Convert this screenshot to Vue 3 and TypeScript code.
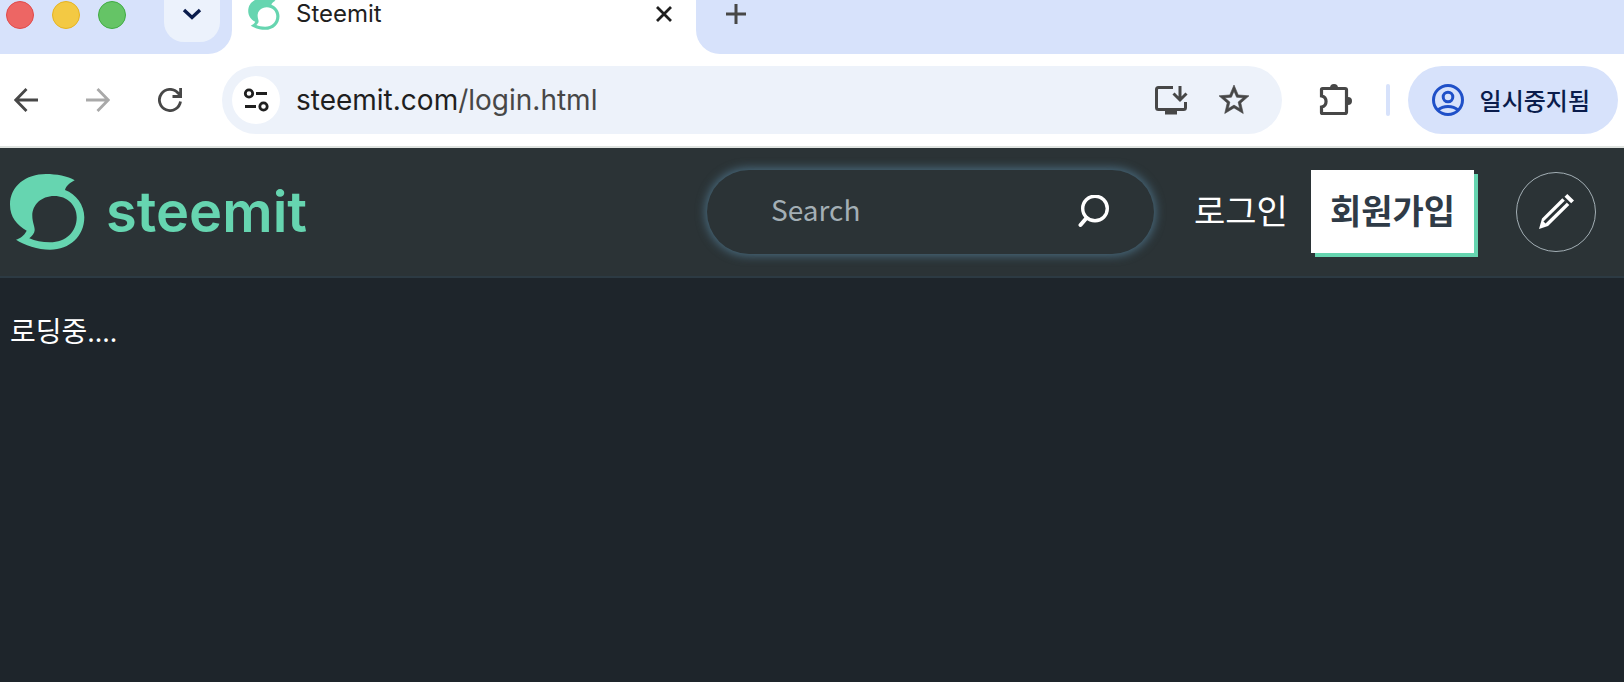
<script setup lang="ts">
import { ref } from 'vue'

const query = ref('')
const lights = ['close', 'minimize', 'zoom']
</script>

<template>
  <div class="window">
    <div class="tabstrip">
      <div class="strip-left">
        <div class="lights">
          <button v-for="name in lights" :key="name" class="light" :class="name" :aria-label="name"></button>
        </div>
        <button class="tab-search" aria-label="Search tabs">
          <svg width="20" height="14" viewBox="0 0 20 14"><path d="M2 3 10 10.500 18 3" fill="none" stroke="#0a1c4c" stroke-width="3.4" /></svg>
        </button>
      </div>
      <div class="tab">
        <svg class="favicon" width="32" height="32" viewBox="0 0 75 76"><path class="mark" fill-rule="evenodd" d="M64.700 6.300C58 2 46 0 36 0 16 0 0 12 0 30.700 0 43 7 51 16.700 56.700 14 62 10 64.500 6 65.700 14 71 28 75.700 40 75.700 60 75.700 74.300 62 74.300 43.300 74.300 31 66 20 55 16 56 12 60 8.500 64.700 6.300ZM44.300 22C57 22 66.700 31 66.700 43.300 66.700 58 56 68.300 40 68.300 32 68.300 25 67 19.300 64.300 22 62 24.700 59 24.700 56 24.700 52 22.300 48 22.300 41.700 22.300 31 31 22 44.300 22Z" /></svg>
        <span class="tab-title">Steemit</span>
        <button class="icon-btn tab-close" aria-label="Close tab">
          <svg width="16" height="16" viewBox="0 0 16 16"><path d="M1 1 15 15M15 1 1 15" stroke="#1f1f1f" stroke-width="2.8" /></svg>
        </button>
      </div>
      <div class="strip-right">
        <button class="icon-btn" aria-label="New tab">
          <svg width="20" height="20" viewBox="0 0 20 20"><path d="M10 0V20M0 10H20" stroke="#474747" stroke-width="3" /></svg>
        </button>
      </div>
    </div>

    <div class="toolbar">
      <div class="nav">
        <button class="icon-btn nav-btn" aria-label="Back">
          <svg width="24" height="24" viewBox="0 0 24 24"><path d="M24 12H2M12.500 1 1.800 12 12.500 23" fill="none" stroke="#474747" stroke-width="2.800" /></svg>
        </button>
        <button class="icon-btn nav-btn" aria-label="Forward">
          <svg width="24" height="24" viewBox="0 0 24 24"><path d="M0 12H22M11.500 1 22.200 12 11.500 23" fill="none" stroke="#a9a9a9" stroke-width="2.800" /></svg>
        </button>
        <button class="icon-btn nav-btn" aria-label="Reload">
          <svg width="24" height="24" viewBox="0 0 24 24"><path d="M22.500 13.500A10.600 10.600 0 1 1 20 5L22 7.500M22.600 0V8.500H14.500" fill="none" stroke="#474747" stroke-width="2.800" /></svg>
        </button>
      </div>
      <div class="omnibox">
        <button class="site-info" aria-label="Site information">
          <svg width="26" height="24" viewBox="0 0 26 24" fill="none" stroke="#1f1f1f" stroke-width="2.800"><circle cx="6" cy="5.500" r="3.700" /><path d="M13 5.500H24M2 18.500H13" /><circle cx="20.500" cy="18.500" r="3.700" /></svg>
        </button>
        <a class="url" href="#">steemit.com<span>/login.html</span></a>
        <button class="icon-btn" aria-label="Install app">
          <svg width="34" height="30" viewBox="0 0 34 30" fill="none" stroke="#474747" stroke-width="3"><path d="M19 2.500H4.500Q2.500 2.500 2.500 4.500V22.500Q2.500 24.500 4.500 24.500H29.500Q31.500 24.500 31.500 22.500V17" /><path d="M26 1V14.500M19.500 8.500 26 15 32.500 8.500" /><path d="M11 27H23" stroke-width="5" /></svg>
        </button>
        <button class="icon-btn" aria-label="Bookmark this tab">
          <svg width="36" height="36" viewBox="0 0 24 24"><path fill="#474747" stroke="#474747" stroke-width="0.4" d="m22 9.240-7.190-.62L12 2 9.190 8.630 2 9.240l5.460 4.730L5.820 21 12 17.270 18.180 21l-1.630-7.030L22 9.240zM12 15.400l-3.760 2.270 1-4.280-3.320-2.880 4.380-.38L12 6.100l1.710 4.040 4.380.38-3.320 2.880 1 4.280L12 15.400z" /></svg>
        </button>
      </div>
      <button class="icon-btn extensions" aria-label="Extensions">
        <svg width="34" height="34" viewBox="0 0 34 34"><path d="M3.500 5.500H26Q27.500 5.500 27.500 7V29Q27.500 30.500 26 30.500H3.500Q2.500 30.500 2.500 29.500V24A5.600 5.600 0 0 0 2.500 13V6.500Q2.500 5.500 3.500 5.500Z" fill="none" stroke="#474747" stroke-width="3.200" /><path d="M11 5.500V5A4 4 0 0 1 19 5V5.500ZM28 14H29A4 4 0 0 1 29 22H28Z" fill="#474747" /></svg>
      </button>
      <span class="divider"></span>
      <button class="profile">
        <svg width="32" height="32" viewBox="0 0 32 32" fill="none" stroke="#1f50c8" stroke-width="3"><circle cx="16" cy="16" r="14.500" /><circle cx="16" cy="13" r="4.800" /><path d="M6 26Q10 22.500 16 22.500T26 26" /></svg>
        <span>일시중지됨</span>
      </button>
    </div>

    <header class="site-header">
      <a class="brand" href="#" aria-label="steemit">
        <svg width="75" height="76" viewBox="0 0 75 76"><path class="mark" fill-rule="evenodd" d="M64.700 6.300C58 2 46 0 36 0 16 0 0 12 0 30.700 0 43 7 51 16.700 56.700 14 62 10 64.500 6 65.700 14 71 28 75.700 40 75.700 60 75.700 74.300 62 74.300 43.300 74.300 31 66 20 55 16 56 12 60 8.500 64.700 6.300ZM44.300 22C57 22 66.700 31 66.700 43.300 66.700 58 56 68.300 40 68.300 32 68.300 25 67 19.300 64.300 22 62 24.700 59 24.700 56 24.700 52 22.300 48 22.300 41.700 22.300 31 31 22 44.300 22Z" /></svg>
        <span>steemit</span>
      </a>
      <form class="search" @submit.prevent>
        <input v-model="query" type="text" placeholder="Search" aria-label="Search" />
        <button class="icon-btn" aria-label="Submit search">
          <svg width="32" height="34" viewBox="0 0 32 34" fill="none" stroke="#fff" stroke-width="3.400"><circle cx="17" cy="13.500" r="12.300" /><path d="M8.500 23 2.500 30" stroke-linecap="round" stroke-width="4" /></svg>
        </button>
      </form>
      <a class="login" href="#">로그인</a>
      <button class="signup">회원가입</button>
      <button class="compose" aria-label="Create a post">
        <svg width="36" height="36" viewBox="0 0 36 36"><path fill="#fff" d="M1 35 4 24.500 24.300 4.300 31.300 11 10 32ZM26.500 2.800 29.300 0 36 6.500 33.200 9.300Z" /><path d="M6.500 28.500 28 7.500" stroke="#2b3336" stroke-width="3" /></svg>
      </button>
    </header>

    <main>로딩중....</main>
  </div>
</template>

<style>
body {
  background: #1e252b;
}
</style>

<style scoped>
.window {
  font-family: Inter, "Noto Sans CJK KR", sans-serif;
}
button {
  border: 0;
  padding: 0;
  margin: 0;
  background: none;
  font: inherit;
  color: inherit;
}
a {
  color: inherit;
  text-decoration: none;
}
svg {
  display: block;
  flex: none;
}
.mark {
  fill: #66d5b0;
}
.icon-btn {
  display: flex;
  align-items: center;
  justify-content: center;
}
.tabstrip {
  display: flex;
  height: 54px;
  background: #fff;
}
.strip-left {
  display: flex;
  align-items: flex-start;
  box-sizing: border-box;
  width: 232px;
  padding-left: 6px;
  background: #d7e2fb;
  border-bottom-right-radius: 24px;
}
.lights {
  display: flex;
  gap: 18px;
  padding-top: 1px;
}
.light {
  box-sizing: border-box;
  width: 28px;
  height: 28px;
  border: 1px solid #e14a4a;
  border-radius: 50%;
  background: #ed6664;
}
.light.minimize {
  background: #f3c943;
  border-color: #e6b320;
}
.light.zoom {
  background: #65c466;
  border-color: #40ac43;
}
.tab-search {
  display: flex;
  justify-content: center;
  width: 56px;
  height: 42px;
  margin-left: 38px;
  padding-top: 7px;
  border-radius: 0 0 20px 20px;
  background: #ecf2fc;
}
.tab {
  display: flex;
  align-items: center;
  box-sizing: border-box;
  width: 464px;
  height: 28px;
  padding: 0 24px 0 16px;
}
.tab-title {
  margin-left: 16px;
  font-size: 24px;
  line-height: 28px;
  color: #1f1f1f;
}
.tab-close {
  margin-left: auto;
}
.strip-right {
  display: flex;
  flex: 1;
  align-items: flex-start;
  padding: 4px 0 0 30px;
  background: #d7e2fb;
  border-bottom-left-radius: 24px;
}
.toolbar {
  display: flex;
  align-items: center;
  height: 92px;
  padding: 0 6px 0 2px;
  background: #fff;
  border-bottom: 2px solid #dfe3e0;
}
.nav {
  display: flex;
  gap: 24px;
  margin-right: 28px;
}
.nav-btn {
  width: 48px;
  height: 48px;
}
.omnibox {
  display: flex;
  flex: 1;
  align-items: center;
  gap: 28px;
  height: 68px;
  padding: 0 30px 0 10px;
  border-radius: 34px;
  box-sizing: border-box;
  background: #edf2fa;
}
.site-info {
  display: flex;
  align-items: center;
  justify-content: center;
  width: 48px;
  height: 48px;
  border-radius: 50%;
  background: #fff;
}
.url {
  flex: 1;
  margin-left: -12px;
  font-size: 28px;
  color: #1f1f1f;
}
.url span {
  color: #474747;
}
.extensions {
  margin-left: 37px;
}
.divider {
  width: 4px;
  height: 32px;
  margin: 0 18px 0 33px;
  border-radius: 2px;
  background: #d7e2fb;
}
.profile {
  display: flex;
  align-items: center;
  gap: 16px;
  height: 68px;
  padding: 0 28px 0 24px;
  border-radius: 34px;
  background: #d7e2fb;
  color: #0a1c4c;
  font-size: 24px;
  font-weight: 500;
}
.profile span {
  padding-bottom: 2px;
}
.site-header {
  display: flex;
  align-items: center;
  height: 128px;
  padding: 0 28px 0 10px;
  border-bottom: 2px solid #2c3a43;
  background: #2b3336;
  color: #fff;
  font-family: "Noto Sans CJK KR", sans-serif;
}
.brand {
  display: flex;
  align-items: center;
  gap: 21px;
  margin-right: auto;
  font-family: Inter, sans-serif;
  font-size: 56px;
  font-weight: 600;
  line-height: 76px;
  color: #66d5b0;
}
.search {
  display: flex;
  align-items: center;
  box-sizing: border-box;
  width: 447px;
  height: 84px;
  padding: 0 44px 0 64px;
  border-radius: 42px;
  box-shadow: 0 0 10px 2px #48697c;
}
.search input {
  flex: 1;
  min-width: 0;
  padding: 0 0 6px;
  border: 0;
  outline: 0;
  background: none;
  color: #fff;
  font-family: "Noto Sans CJK KR", sans-serif;
  font-size: 28px;
}
.search input::placeholder {
  color: #a3afb5;
}
.login {
  margin-left: 40px;
  padding-bottom: 6px;
  font-size: 34px;
}
.signup {
  height: 83px;
  margin: 0 0 2px 23px;
  padding: 0 19px 4px;
  background: #fff;
  box-shadow: 4px 4px #66d5b0;
  color: #2f3b47;
  font-size: 34px;
  font-weight: 700;
}
.compose {
  display: flex;
  align-items: center;
  justify-content: center;
  box-sizing: border-box;
  width: 80px;
  height: 80px;
  margin-left: 42px;
  border: 1px solid #a3afb5;
  border-radius: 50%;
}
main {
  padding: 33px 10px;
  color: #fff;
  font-family: "Noto Sans", "Noto Sans CJK KR", sans-serif;
  font-size: 28px;
  line-height: 40px;
}
</style>
